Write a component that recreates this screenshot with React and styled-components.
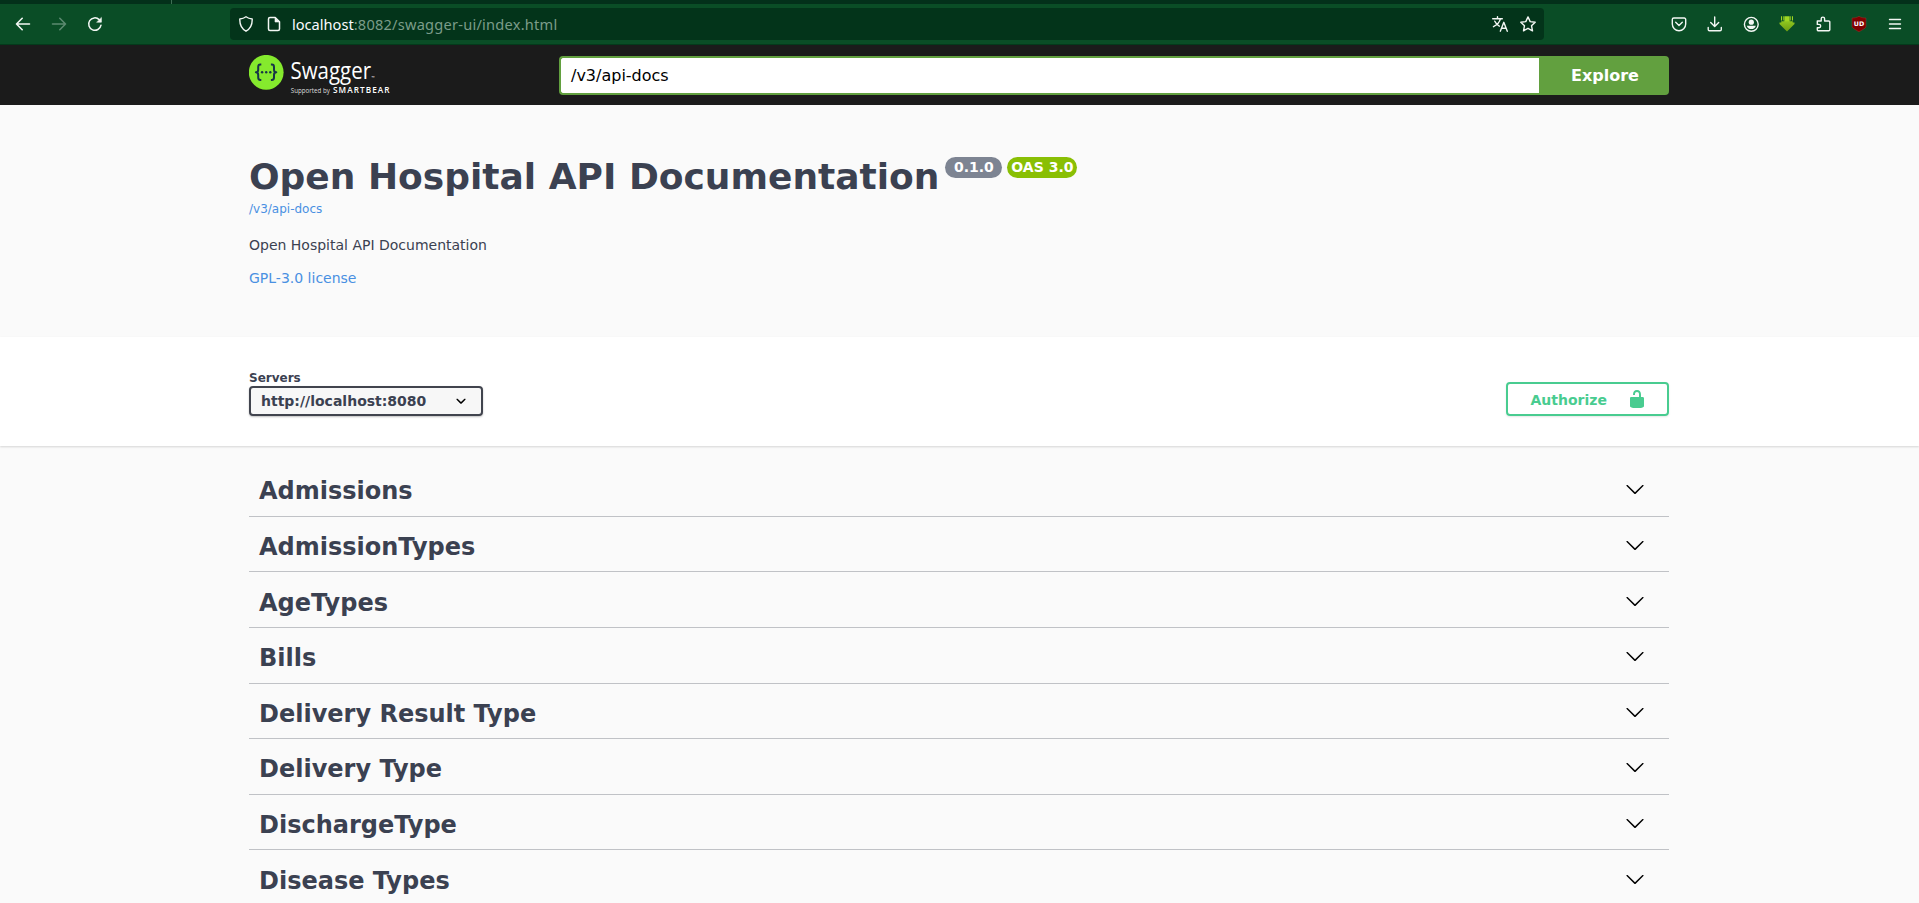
import React from "react";
import styled, { createGlobalStyle } from "styled-components";

const GlobalStyle = createGlobalStyle`
  * { box-sizing: border-box; }
  html, body { margin: 0; padding: 0; }
  body {
    background: #fafafa;
    color: #3b4151;
    font-family: "DejaVu Sans", sans-serif;
    height: 903px;
    overflow: hidden;
  }
  a { text-decoration: none; color: #4990e2; }
`;

const Page = styled.div`
  height: 903px;
  overflow: hidden;
`;

const TabStrip = styled.div`
  height: 4px;
  background: #03301a;
  padding-left: 171px;
`;

const TabDivider = styled.div`
  width: 1px;
  height: 4px;
  background: #3f6f55;
`;

const BrowserBar = styled.div`
  display: flex;
  align-items: center;
  height: 41px;
  background: #0a4d26;
  border-bottom: 1px solid #043a1b;
`;

const NavButtons = styled.div`
  display: flex;
  gap: 20px;
  width: 230px;
  padding-left: 15px;
`;

const AddressBar = styled.div`
  display: flex;
  align-items: center;
  width: 1314px;
  height: 32px;
  padding: 0 8px 0 8px;
  border-radius: 4px;
  background: #03341a;
`;

const AddressIcons = styled.div`
  display: flex;
  gap: 12px;
  margin-right: ${(p) => p.$after || 0}px;
`;

const Url = styled.div`
  flex: 1;
  font: 14.6px/20px "Noto Sans", "Open Sans", sans-serif;
  letter-spacing: 0.23px;
  color: #7b9c89;
  white-space: nowrap;
`;

const Host = styled.span`
  color: #fbfbfe;
  letter-spacing: 0;
`;

const Extensions = styled.div`
  flex: 1;
  display: flex;
  justify-content: flex-end;
  gap: 20px;
  padding-right: 16px;
`;

const Icon = styled.svg`
  display: block;
  width: 16px;
  height: 16px;
  fill: none;
  stroke: ${(p) => (p.$dim ? "#5c8a70" : "#f3f7f4")};
  stroke-width: ${(p) => p.$weight || 1.4};
  stroke-linecap: round;
  stroke-linejoin: round;
`;

const Wrapper = styled.div`
  width: 1420px;
  margin: 0 0 0 249px;
`;

const Topbar = styled.header`
  height: 60px;
  background: #1b1b1b;
`;

const TopbarRow = styled(Wrapper)`
  display: flex;
  align-items: center;
  height: 60px;
`;

const Logo = styled.div`
  width: 310px;
  height: 40px;
`;

const SearchForm = styled.div`
  display: flex;
  flex: 1;
  height: 39px;
  margin-top: 1px;
`;

const SearchBox = styled.div`
  flex: 1;
  padding: 0 10px;
  border: 2px solid #62a03f;
  border-right: 0;
  border-radius: 4px 0 0 4px;
  background: #fff;
  color: #000;
  font-size: 16px;
  line-height: 35px;
`;

const ExploreButton = styled.button`
  width: 130px;
  padding: 0 0 0 2px;
  border: 0;
  border-radius: 0 4px 4px 0;
  background: #62a03f;
  color: #fff;
  font: bold 16px "DejaVu Sans", sans-serif;
`;

const Info = styled(Wrapper)`
  height: 232px;
  padding-top: 51px;
`;

const TitleRow = styled.div`
  display: flex;
  align-items: flex-start;
`;

const Title = styled.h2`
  margin: 0 1px 0 0;
  font-size: 36px;
  font-weight: bold;
  line-height: 42px;
`;

const Badge = styled.span`
  height: 21px;
  margin: 1px 0 0 5px;
  padding: 0 ${(p) => p.$pad}px;
  border-radius: 57px;
  background: ${(p) => p.$color};
  color: #fff;
  font-size: 14px;
  font-weight: bold;
  line-height: 20px;
`;

const SpecLink = styled.a`
  display: block;
  font-size: 12px;
  line-height: 14px;
  margin-top: 4px;
`;

const Description = styled.p`
  margin: 20px 0 0;
  font-size: 14px;
  line-height: 18px;
`;

const License = styled.a`
  display: block;
  margin-top: 15px;
  font-size: 14px;
  line-height: 18px;
`;

const SchemeSection = styled.section`
  height: 109px;
  background: #fff;
  box-shadow: 0 1px 2px rgba(0, 0, 0, 0.15);
`;

const SchemeRow = styled(Wrapper)`
  display: flex;
  justify-content: space-between;
  align-items: flex-end;
  height: 79px;
`;

const ServersLabel = styled.div`
  font-size: 12px;
  font-weight: bold;
  line-height: 14px;
  margin-bottom: 1px;
`;

const ServerSelect = styled.div`
  display: flex;
  align-items: center;
  justify-content: space-between;
  width: 234px;
  height: 30px;
  padding: 0 10px 0 10px;
  border: 2px solid #41444e;
  border-radius: 4px;
  background: #f7f7f7;
  box-shadow: 0 1px 2px rgba(0, 0, 0, 0.25);
  font-size: 14px;
  font-weight: bold;
`;

const AuthorizeButton = styled.button`
  display: flex;
  align-items: center;
  justify-content: space-between;
  width: 163px;
  height: 34px;
  padding: 0 20px 0 22.5px;
  border: 2px solid #49cc90;
  border-radius: 4px;
  background: transparent;
  box-shadow: 0 1px 2px rgba(0, 0, 0, 0.1);
  color: #49cc90;
  font: bold 14px "DejaVu Sans", sans-serif;
`;

const AuthorizeLabel = styled.span`
  padding-top: 2px;
`;

const TagList = styled(Wrapper)`
  padding-top: 20.15px;
`;

const TagRow = styled.h3`
  display: flex;
  align-items: center;
  justify-content: space-between;
  height: 50.6px;
  margin: 0 0 5px;
  padding: 1.1px 24px 0 10px;
  border-bottom: 1px solid rgba(59, 65, 81, 0.3);
  font-size: 24px;
  font-weight: bold;
  line-height: 28px;
`;

const Chevron = styled.svg`
  width: 20px;
  height: 20px;
  margin-bottom: 4px;
`;

const Arrow = ({ forward }) => (
  <Icon viewBox="0 0 16 16" $dim={forward} $weight={1.6}>
    <path d={forward ? "M1.5 8h13M8.8 2.300l5.700 5.700-5.700 5.700" : "M14.5 8h-13M7.2 2.300l-5.700 5.700 5.700 5.700"} />
  </Icon>
);

const SwaggerLogo = () => (
  <svg width="160" height="44" viewBox="0 0 160 44">
    <circle cx="17.2" cy="17.3" r="17.4" fill="#85ea2d" />
    <g fill="none" stroke="#173647" strokeWidth="2" strokeLinejoin="round">
      <path d="M12.3 9.6h-1c-1.700 0-2.100.8-2.100 2.400v2.700c0 1.700-.7 2.600-2.300 2.600 1.600 0 2.300.9 2.300 2.600v2.700c0 1.600.4 2.400 2.100 2.400h1" />
      <path d="M21.9 9.600h1c1.700 0 2.100.8 2.100 2.400v2.700c0 1.700.7 2.600 2.300 2.600-1.600 0-2.300.9-2.300 2.600v2.700c0 1.600-.4 2.400-2.100 2.400h-1" />
    </g>
    <g fill="#173647">
      <circle cx="13.100" cy="17.3" r="1.2" />
      <circle cx="17.2" cy="17.3" r="1.2" />
      <circle cx="21.300" cy="17.3" r="1.2" />
    </g>
    <g fill="#fff" fontFamily="Open Sans, sans-serif">
      <text x="41.5" y="24.3" fontSize="23.5" textLength="80.500" lengthAdjust="spacingAndGlyphs">Swagger</text>
      <text x="122.500" y="24" fontSize="4">™</text>
      <text x="41.8" y="38.2" fontSize="6.2" textLength="39" lengthAdjust="spacing" fillOpacity=".85">Supported by</text>
      <text x="84" y="38.2" fontWeight="600" fontSize="8.2" textLength="56.5" lengthAdjust="spacing">SMARTBEAR</text>
    </g>
  </svg>
);

const tags = [
  "Admissions",
  "AdmissionTypes",
  "AgeTypes",
  "Bills",
  "Delivery Result Type",
  "Delivery Type",
  "DischargeType",
  "Disease Types",
];

export default function App() {
  return (
    <Page>
      <GlobalStyle />
      <TabStrip><TabDivider /></TabStrip>
      <BrowserBar>
        <NavButtons>
          <Arrow />
          <Arrow forward />
          <Icon viewBox="0 0 16 16" $weight={1.5}>
            <path d="M14 9.2A6.2 6.2 0 1 1 12.2 3.6" />
            <path d="M14.4 1.8v4.4H10z" fill="#f3f7f4" strokeWidth=".6" />
          </Icon>
        </NavButtons>
        <AddressBar>
          <AddressIcons $after={10}>
            <Icon viewBox="0 0 16 16">
              <path d="M8 .8c1.700 1.300 3.800 2 6.200 2.200.2 5.500-1.500 9.600-6.200 12.200C3.300 12.600 1.600 8.500 1.800 3 4.200 2.800 6.300 2.100 8 .8z" />
            </Icon>
            <Icon viewBox="0 0 16 16" $weight={1.5}>
              <path d="M4 1.500h5.200l4.300 4.300V13a1.500 1.500 0 0 1-1.500 1.500H4A1.500 1.500 0 0 1 2.500 13V3A1.500 1.500 0 0 1 4 1.500z" />
              <path d="M9 1.700V6h4.300z" fill="#f3f7f4" strokeWidth=".6" />
            </Icon>
          </AddressIcons>
          <Url><Host>localhost</Host>:8082/swagger-ui/index.html</Url>
          <AddressIcons>
            <Icon viewBox="0 0 16 16">
              <path d="M.7 2.700h9.600M5.500.8v1.900M8.500 2.700C7.700 6 5 9 1.500 10.700M2.800 5.200c1 2.100 2.600 3.800 4.500 5M8.300 15.200l3.500-8.900 3.500 8.900M9.500 12.300h4.600" />
            </Icon>
            <Icon viewBox="0 0 16 16">
              <path d="m8 .9 2.200 4.700 5 .6-3.700 3.500 1 5.100L8 12.300l-4.500 2.500 1-5.100L.8 6.200l5-.6z" />
            </Icon>
          </AddressIcons>
        </AddressBar>
        <Extensions>
          <Icon viewBox="0 0 16 16">
            <path d="M2.800 2h10.400a1.500 1.500 0 0 1 1.500 1.500V8a6.700 6.700 0 0 1-13.400 0V3.500A1.500 1.500 0 0 1 2.800 2zM4.700 6.300 8 9.400l3.300-3.100" />
          </Icon>
          <Icon viewBox="0 0 16 16">
            <path d="M7.700 1v9.300M3.700 6.500l4 4 4-4M1.200 11.500v2a1.300 1.300 0 0 0 1.300 1.300H13a1.300 1.300 0 0 0 1.300-1.300v-2" />
          </Icon>
          <Icon viewBox="0 0 16 16">
            <circle cx="8.300" cy="8.300" r="6.900" />
            <circle cx="8.300" cy="6.200" r="2.600" fill="#f3f7f4" stroke="none" />
            <path d="M3.800 9.700h9c-.5 2.200-2.300 3.400-4.500 3.400s-4-1.200-4.500-3.400z" fill="#f3f7f4" stroke="none" />
          </Icon>
          <Icon viewBox="0 0 16 16">
            <defs>
              <linearGradient id="arrowFill" x1="0" y1="0" x2="0" y2="1">
                <stop offset="0" stopColor="#8fc61f" />
                <stop offset="1" stopColor="#6d9c12" />
              </linearGradient>
            </defs>
            <path d="M2 .3h1v4.200H2zM3.900.3h.8v4.200h-.8zM5.300.3h5.400V6H5.300zM11.300.3h.8v4.200h-.8zM13 .3h1v4.200h-1z" fill="#9ed622" stroke="none" />
            <path d="M.5 8V6.500h1.800V5.200h11.400v1.300h1.800V8L8 15.500z" fill="url(#arrowFill)" stroke="none" />
          </Icon>
          <Icon viewBox="-1.200 0 16 16">
            <path d="M1.100 5h3.900V2.800a1.700 1.700 0 0 1 3.400 0V5h4.100a1.100 1.100 0 0 1 1.100 1.100v7.600a1.100 1.100 0 0 1-1.100 1.100H2.200a1.100 1.100 0 0 1-1.100-1.100v-1.900h1.700a1.700 1.700 0 0 0 0-3.400H1.100z" />
          </Icon>
          <Icon viewBox="0 0 16 16">
            <path d="M8 .3c2 1.300 4.300 1.700 7 1.700v8.500c0 1.800-4 3.300-7 5.400-3-2.100-7-3.600-7-5.400V2C3.700 2 6 1.600 8 .3z" fill="#800000" stroke="#8f4a3a" strokeWidth=".4" />
            <text x="8" y="9.800" textAnchor="middle" fontFamily="DejaVu Sans, sans-serif" fontWeight="bold" fontSize="6.300" fill="#fff" stroke="none">UD</text>
          </Icon>
          <Icon viewBox="0 0 16 16">
            <path d="M2.500 3.500h11M2.500 8h11M2.500 12.500h11" />
          </Icon>
        </Extensions>
      </BrowserBar>
      <Topbar>
        <TopbarRow>
          <Logo><SwaggerLogo /></Logo>
          <SearchForm>
            <SearchBox>/v3/api-docs</SearchBox>
            <ExploreButton>Explore</ExploreButton>
          </SearchForm>
        </TopbarRow>
      </Topbar>
      <Info>
        <TitleRow>
          <Title>Open Hospital API Documentation</Title>
          <Badge $color="#7d8492" $pad={8.5}>0.1.0</Badge>
          <Badge $color="#89bf04" $pad={4}>OAS 3.0</Badge>
        </TitleRow>
        <SpecLink href="#">/v3/api-docs</SpecLink>
        <Description>Open Hospital API Documentation</Description>
        <License href="#">GPL-3.0 license</License>
      </Info>
      <SchemeSection>
        <SchemeRow>
          <div>
            <ServersLabel>Servers</ServersLabel>
            <ServerSelect>
              http://localhost:8080
              <svg width="20" height="20" viewBox="0 0 20 20">
                <path d="M13.418 7.859c.271-.268.709-.268.978 0 .27.268.272.701 0 .969l-3.908 3.830c-.27.268-.707.268-.979 0l-3.908-3.830c-.27-.267-.27-.701 0-.969.271-.268.709-.268.978 0L10 11z" />
              </svg>
            </ServerSelect>
          </div>
          <AuthorizeButton>
            <AuthorizeLabel>Authorize</AuthorizeLabel>
            <svg width="20" height="20" viewBox="0 0 20 20" fill="#49cc90">
              <path d="M15.8 8H14V5.600C14 2.703 12.665 1 10 1 7.334 1 6 2.703 6 5.600V6h2v-.801C8 3.754 8.797 3 10 3c1.203 0 2 .754 2 2.199V8H4c-.553 0-1 .646-1 1.199V17c0 .549.428 1.139.951 1.307l1.197.387C5.672 18.861 6.550 19 7.100 19h5.800c.549 0 1.428-.139 1.951-.307l1.196-.387c.524-.167.953-.757.953-1.306V9.199C17 8.646 16.352 8 15.800 8z" />
            </svg>
          </AuthorizeButton>
        </SchemeRow>
      </SchemeSection>
      <TagList>
        {tags.map((tag) => (
          <TagRow key={tag}>
            {tag}
            <Chevron viewBox="0 0 20 20">
              <path d="M17.418 6.109c.272-.268.709-.268.979 0s.271.701 0 .969l-7.908 7.830c-.27.268-.707.268-.979 0l-7.908-7.830c-.27-.268-.27-.701 0-.969s.709-.268.979 0L10 13.250z" />
            </Chevron>
          </TagRow>
        ))}
      </TagList>
    </Page>
  );
}
